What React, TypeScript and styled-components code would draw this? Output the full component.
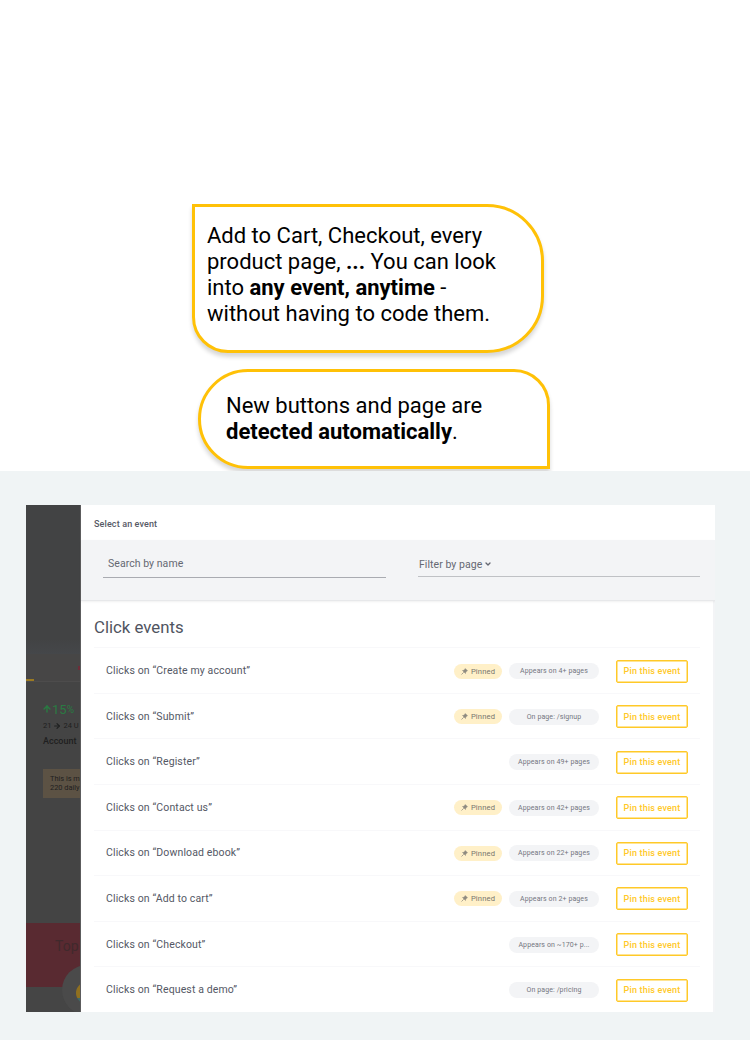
import React from "react";
import styled, { createGlobalStyle } from "styled-components";
import { ArrowUp, ArrowRight, ChevronDown } from "lucide-react";

const GlobalStyle = createGlobalStyle`
  *, *::before, *::after { box-sizing: border-box; }
  body { margin: 0; background: #fff; font-family: Roboto, "Liberation Sans", sans-serif; }
`;

const Page = styled.main`
  width: 750px;
  height: 1040px;
  overflow: hidden;
  display: flex;
  flex-direction: column;
`;

const Intro = styled.section`
  height: 471px;
  flex: none;
  padding: 204px 0 0 192px;
  display: flex;
  flex-direction: column;
  gap: 16px;
`;

const Bubble = styled.p<{ $reply?: boolean }>`
  margin: 0 0 0 ${p => (p.$reply ? 6 : 0)}px;
  width: 352px;
  height: ${p => (p.$reply ? 100 : 149)}px;
  padding: ${p => (p.$reply ? "21px 25px" : "16px 12px")};
  border: 3px solid #ffc107;
  border-radius: ${p => (p.$reply ? "50px 36px 0 50px" : "0 57px 57px 36px")};
  box-shadow: 0 4px 4px rgba(0, 0, 0, 0.16);
  background: #fff;
  color: #000;
  font-size: 22px;
  line-height: 26px;
  white-space: nowrap;
`;

const Showcase = styled.section`
  flex: 1;
  position: relative;
  background: #f0f4f5;
  padding: 34px 35px 28px 26px;
`;

const AppWindow = styled.div`
  display: flex;
  height: 507px;
  background: #f3f4f6;
  overflow: hidden;
`;

const Backdrop = styled.aside`
  width: 55px;
  flex: none;
  display: flex;
  flex-direction: column;
  overflow: hidden;
  background: #454545;
  border-right: 1px solid #5c5c5d;
  white-space: nowrap;
  svg { flex: none; }
`;

const BackdropTop = styled.div`
  height: 149px;
  flex: none;
  background: linear-gradient(#424344 90%, #45474a);
`;

const BackdropTabs = styled.div`
  height: 28px;
  flex: none;
  display: flex;
  align-items: flex-end;
  justify-content: space-between;
  background: #474646;
  border-bottom: 1px solid #4d4c4c;
`;

const ActiveTab = styled.div`
  width: 8px;
  height: 2px;
  background: #9b7a22;
`;

const TabAlert = styled.div`
  width: 2px;
  height: 4px;
  margin-bottom: 11px;
  background: #6e2c38;
`;

const Metric = styled.div`
  flex: none;
  height: 241px;
  padding: 18px 0 0 17px;
  background: #444444;
  color: #1f2020;
`;

const Growth = styled.div`
  display: flex;
  align-items: center;
  height: 18px;
  margin-left: -1px;
  color: #2a7a42;
  font-size: 13px;
  small { font-size: 10px; }
`;

const Users = styled.div`
  display: flex;
  align-items: center;
  gap: 2px;
  height: 15px;
  font-size: 7.5px;
`;

const Account = styled.div`
  font-size: 9px;
  font-weight: 500;
  line-height: 16px;
`;

const Hint = styled.div`
  margin-top: 20px;
  height: 29px;
  padding: 6px 7px;
  background: #5c5244;
  font-size: 7.4px;
  line-height: 8.5px;
`;

const Promo = styled.div`
  height: 64px;
  flex: none;
  padding: 15px 0 0 29px;
  background: #592a31;
  color: #40292c;
  font-size: 14px;
`;

const BackdropFoot = styled.div`
  position: relative;
  flex: 1;
`;

const Avatar = styled.div`
  position: absolute;
  left: 36px;
  top: -22px;
  width: 50px;
  height: 50px;
  border-radius: 50%;
  background: #4a4a4a;
  padding: 17px 14px;
`;

const AvatarDot = styled.div`
  width: 22px;
  height: 22px;
  border-radius: 50%;
  background: linear-gradient(#90701f 72%, #3f6a68 72%);
`;

const Panel = styled.div`
  flex: 1;
  display: flex;
  flex-direction: column;
`;

const Title = styled.header`
  height: 35px;
  flex: none;
  padding-left: 13px;
  background: #fff;
  color: #565a66;
  font-size: 9px;
  font-weight: 500;
  line-height: 38px;
  letter-spacing: 0.12px;
`;

const Filters = styled.div`
  position: relative;
  height: 61px;
  flex: none;
  padding: 12px 15px 0 22px;
  display: grid;
  grid-template-columns: 283px 282px;
  justify-content: space-between;
  border-bottom: 1px solid #e7e8ea;
  box-shadow: 0 1px 2px rgba(0, 0, 0, 0.06);
`;

const Field = styled.div<{ $select?: boolean }>`
  height: ${p => (p.$select ? 25 : 26)}px;
  padding: ${p => (p.$select ? "0 0 0 1px" : "0 0 3px 5px")};
  display: flex;
  align-items: center;
  gap: 2px;
  border-bottom: 1px solid ${p => (p.$select ? "#bfc1c5" : "#a9abb1")};
  color: #656872;
  font-size: 10.5px;
  letter-spacing: 0.05px;
`;

const List = styled.div`
  width: 632px;
  flex: 1;
  padding: 0 13px;
  background: #fff;
`;

const Heading = styled.h2`
  margin: 0;
  height: 46.3px;
  color: #50545f;
  font-size: 16.8px;
  font-weight: 400;
  line-height: 53px;
`;

const Row = styled.div`
  display: flex;
  align-items: center;
  height: 45.58px;
  padding: 1px 12px 0;
  border-top: 1px solid #f8f8fa;
`;

const EventName = styled.span`
  flex: 1;
  padding-bottom: 1px;
  color: #545865;
  font-size: 10.5px;
  letter-spacing: 0.13px;
`;

const Pinned = styled.span`
  width: 48px;
  height: 15px;
  margin-right: 7px;
  display: flex;
  align-items: center;
  justify-content: center;
  gap: 3px;
  border-radius: 8px;
  background: #fff0c8;
  color: #77756f;
  font-size: 7.6px;
  letter-spacing: 0.15px;
`;

const Where = styled.span`
  width: 90px;
  height: 16px;
  margin-right: 17px;
  border-radius: 8px;
  background: #f3f4f6;
  color: #747680;
  font-size: 7px;
  line-height: 16px;
  text-align: center;
  letter-spacing: 0.1px;
`;

const PinButton = styled.button`
  width: 72px;
  height: 23px;
  padding: 0;
  border: 1px solid #ffc928;
  border-radius: 2px;
  box-shadow: inset 0 0 0 0.5px #ffc928;
  background: #fff;
  color: #ffc928;
  font: 500 9px Roboto, "Liberation Sans", sans-serif;
  letter-spacing: 0.17px;
`;

const PinIcon = () => (
  <svg width="7" height="7" viewBox="0 0 14 14" fill="#8f8b80" stroke="#8f8b80">
    <path d="M8.500 1 13 5.500 11.500 6 9.500 8.500 9 11 3 5 5.500 4.500 8 2.500Z" />
    <path d="M5.500 8.500 1 13" strokeWidth="1.500" />
  </svg>
);

const events = [
  { name: "Create my account", pinned: true, where: "Appears on 4+ pages" },
  { name: "Submit", pinned: true, where: "On page: /signup" },
  { name: "Register", pinned: false, where: "Appears on 49+ pages" },
  { name: "Contact us", pinned: true, where: "Appears on 42+ pages" },
  { name: "Download ebook", pinned: true, where: "Appears on 22+ pages" },
  { name: "Add to cart", pinned: true, where: "Appears on 2+ pages" },
  { name: "Checkout", pinned: false, where: "Appears on ~170+ p..." },
  { name: "Request a demo", pinned: false, where: "On page: /pricing" },
];

export default function App() {
  return (
    <Page>
      <GlobalStyle />
      <Intro>
        <Bubble>
          Add to Cart, Checkout, every<br />
          product page, <b>...</b> You can look<br />
          into <b>any event, anytime</b> -<br />
          without having to code them.
        </Bubble>
        <Bubble $reply>
          New buttons and page are<br />
          <b>detected automatically</b>.
        </Bubble>
      </Intro>
      <Showcase>
        <AppWindow>
          <Backdrop>
            <BackdropTop />
            <BackdropTabs><ActiveTab /><TabAlert /></BackdropTabs>
            <Metric>
              <Growth><ArrowUp size={10} strokeWidth={3.5} />15<small>%</small></Growth>
              <Users>21 <ArrowRight size={8} strokeWidth={3.5} /> 24 U</Users>
              <Account>Account</Account>
              <Hint>This is m<br />220 daily</Hint>
            </Metric>
            <Promo>Top</Promo>
            <BackdropFoot>
              <Avatar><AvatarDot /></Avatar>
            </BackdropFoot>
          </Backdrop>
          <Panel>
            <Title>Select an event</Title>
            <Filters>
              <Field>Search by name</Field>
              <Field $select>Filter by page <ChevronDown size={8} strokeWidth={4} /></Field>
            </Filters>
            <List>
              <Heading>Click events</Heading>
              {events.map(e => (
                <Row key={e.name}>
                  <EventName>Clicks on “{e.name}”</EventName>
                  {e.pinned && <Pinned><PinIcon />Pinned</Pinned>}
                  <Where>{e.where}</Where>
                  <PinButton>Pin this event</PinButton>
                </Row>
              ))}
            </List>
          </Panel>
        </AppWindow>
      </Showcase>
    </Page>
  );
}
